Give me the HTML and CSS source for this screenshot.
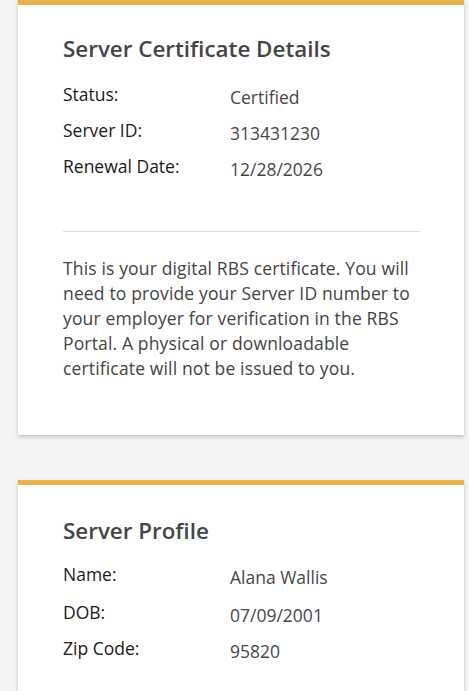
FILE: index.html
```html
<!DOCTYPE html>
<html lang="en">
<head>
<meta charset="utf-8">
<title>Server Certificate</title>
<link rel="stylesheet" href="styles.css">
</head>
<body>
<main class="page">
  <section class="card">
    <h2 class="card-title">Server Certificate Details</h2>
    <div class="details">
      <div class="row"><span class="label">Status:</span><span class="value">Certified</span></div>
      <div class="row"><span class="label">Server ID:</span><span class="value">313431230</span></div>
      <div class="row"><span class="label">Renewal Date:</span><span class="value">12/28/2026</span></div>
    </div>
    <hr class="divider">
    <p class="note">This is your digital RBS certificate. You will need to provide your Server ID number to your employer for verification in the RBS Portal. A physical or downloadable certificate will not be issued to you.</p>
  </section>
  <section class="card card-profile">
    <h2 class="card-title">Server Profile</h2>
    <div class="details">
      <div class="row"><span class="label">Name:</span><span class="value">Alana Wallis</span></div>
      <div class="row row-tall"><span class="label">DOB:</span><span class="value">07/09/2001</span></div>
      <div class="row"><span class="label">Zip Code:</span><span class="value">95820</span></div>
    </div>
  </section>
</main>
</body>
</html>
```
FILE: styles.css
```css
html, body {
  margin: 0;
  padding: 0;
  background: #f4f4f4;
  font-family: "Open Sans", "Liberation Sans", sans-serif;
}

.page {
  display: flex;
  flex-direction: column;
  gap: 45px;
  padding: 0 5px 40px 18px;
}

.card {
  background: #ffffff;
  border-top: 5px solid #e8b14d;
  box-shadow: 0 2px 4px rgba(0, 0, 0, 0.2);
  padding: 30px 44px 54px 45px;
}

.card-profile {
  padding-top: 32px;
}

.card-title {
  margin: 0 0 13px;
  font-size: 22.4px;
  line-height: 28px;
  font-weight: 600;
  color: #454545;
}

.card-profile .card-title {
  margin-bottom: 11px;
}

.row {
  display: grid;
  grid-template-columns: 167px 1fr;
  height: 36px;
  line-height: 36px;
  font-size: 17.5px;
}

.row-tall {
  padding-top: 2px;
}

.label {
  color: #1a1a1a;
}

.value {
  color: #474747;
  padding-top: 3px;
}

.divider {
  margin: 47px 0 0;
  border: 0;
  border-top: 1px solid #dcdcdc;
  height: 0;
}

.note {
  margin: 24px 0 0;
  font-size: 17.5px;
  line-height: 25px;
  letter-spacing: 0.15px;
  color: #444444;
}
```
